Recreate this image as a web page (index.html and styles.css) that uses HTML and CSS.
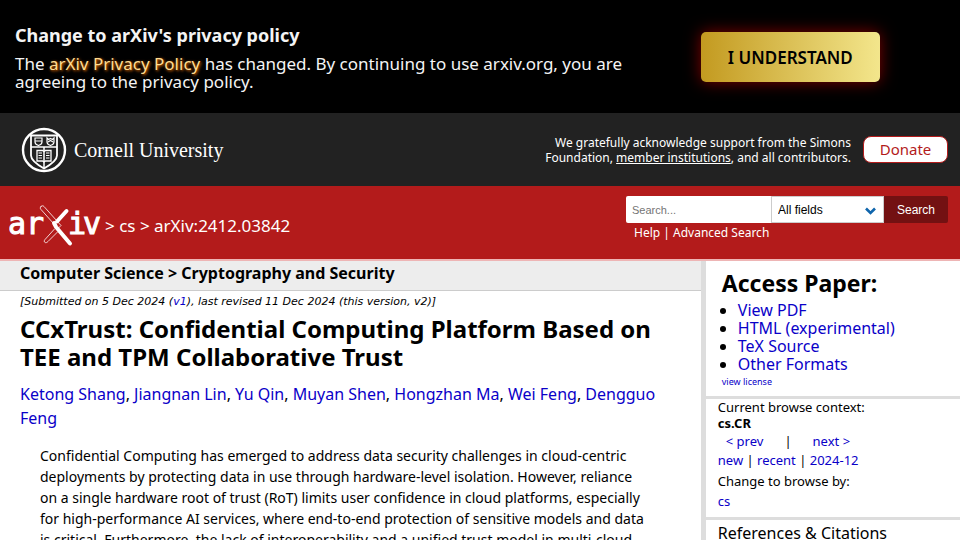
FILE: index.html
```html
<!DOCTYPE html>
<html lang="en">
<head>
    <meta charset="UTF-8">
    <meta name="viewport" content="width=device-width, initial-scale=1.0">
    <title>[2412.03842] CCxTrust: Confidential Computing Platform Based on TEE and TPM Collaborative Trust</title>
    <link rel="stylesheet" href="styles.css">
</head>
<body>
    <section class="policy-banner">
        <div class="policy-text">
            <h2>Change to arXiv's privacy policy</h2>
            <p>The <a href="#">arXiv Privacy Policy</a> has changed. By continuing to use arxiv.org, you are<br>agreeing to the privacy policy.</p>
        </div>
        <div class="policy-action">
            <button type="button" class="understand">I UNDERSTAND</button>
        </div>
    </section>

    <header>
        <div class="support-bar">
            <a class="cornell" href="#">
                <svg width="46" height="46" viewBox="0 0 46 46" fill="none" stroke="#fff" aria-hidden="true">
                    <circle cx="23" cy="23" r="21" stroke-width="2.4"/>
                    <!-- shield -->
                    <path d="M10 8.5h26v20c0 5-6 9-13 13-7-4-13-8-13-13z" stroke-width="1.8"/>
                    <path d="M10 20h26M23 20v21" stroke-width="1.5"/>
                    <path d="M14 11h7v4c0 2-2 3-3.500 3.500-1.500-.5-3.500-1.500-3.500-3.500zM14 14h7M26 11l1.500 1.500 2-1 2 1L33 11v4c0 2-2 3-3.500 3.500C28 18 26 17 26 15zM27 15l2.500-1.500L32 15" stroke-width="1.200"/>
                    <!-- open book -->
                    <path d="M16 23.500h5.500l1.500 1 1.500-1H30v10.500h-5.500l-1.500 1-1.500-1H16z" stroke-width="1.300"/>
                    <path d="M17.500 26H21M17.500 28.500H21M17.500 31H21M25 26h3.500M25 28.500h3.500M25 31h3.500" stroke-width="1"/>
                </svg>
                <span>Cornell University</span>
            </a>
            <p class="support-text">We gratefully acknowledge support from the Simons<br>Foundation, <a href="#">member institutions</a>, and all contributors.</p>
            <a class="donate" href="#">Donate</a>
        </div>

        <div class="title-bar">
            <div class="breadcrumbs">
                <a class="logo" href="#" aria-label="arXiv">
                    <svg width="93" height="42" viewBox="0 0 93 42">
                        <g class="logo-text">
                            <text x="-1" y="29">ar</text>
                            <text x="59" y="29">i</text>
                            <text x="74" y="29">v</text>
                        </g>
                        <g fill="none" stroke="#fff" stroke-linecap="round">
                            <path d="M57.500 6L48 16.500" stroke-width="4"/>
                            <path d="M45 18l2 4L61 38.500" stroke-width="4"/>
                            <path d="M32 1.500c-1 1-1 2 0 3L49 23.500l3-3L35 1.500c-1-1-2-1-3 0zM45.500 24L36 34.500c-1 1-1 2.500 0 3s2 0 3-1L48.500 27" stroke-width=".8"/>
                        </g>
                    </svg>
                </a>
                <span>&gt; <a href="#">cs</a> &gt; arXiv:2412.03842</span>
            </div>
            <form class="search">
                <div class="search-row">
                    <input type="text" placeholder="Search..." aria-label="Search term">
                    <select aria-label="Field to search">
                        <option>All fields</option>
                        <option>Title</option>
                        <option>Author</option>
                        <option>Abstract</option>
                    </select>
                    <svg class="chevron" width="11" height="8" viewBox="0 0 11 8" aria-hidden="true">
                        <path d="M1 1.500l4.500 4.500L10 1.500" fill="none" stroke="#0f65ac" stroke-width="2.600"/>
                    </svg>
                    <button type="submit">Search</button>
                </div>
                <p class="search-help"><a href="#">Help</a> | <a href="#">Advanced Search</a></p>
            </form>
        </div>
    </header>

    <main>
        <article>
            <h2 class="subject">Computer Science &gt; Cryptography and Security</h2>
            <div class="paper">
                <p class="dateline">[Submitted on 5 Dec 2024 (<a href="#">v1</a>), last revised 11 Dec 2024 (this version, v2)]</p>
                <h1>CCxTrust: Confidential Computing Platform Based on<br>TEE and TPM Collaborative Trust</h1>
                <p class="authors"><a href="#">Ketong Shang</a>, <a href="#">Jiangnan Lin</a>, <a href="#">Yu Qin</a>, <a href="#">Muyan Shen</a>, <a href="#">Hongzhan Ma</a>, <a href="#">Wei Feng</a>, <a href="#">Dengguo<br>Feng</a></p>
                <p class="abstract">
                    Confidential Computing has emerged to address data security challenges in cloud-centric<br>
                    deployments by protecting data in use through hardware-level isolation. However, reliance<br>
                    on a single hardware root of trust (RoT) limits user confidence in cloud platforms, especially<br>
                    for high-performance AI services, where end-to-end protection of sensitive models and data<br>
                    is critical. Furthermore, the lack of interoperability and a unified trust model in multi-cloud
                </p>
            </div>
        </article>

        <aside>
            <section class="access">
                <h2>Access Paper:</h2>
                <ul>
                    <li><a href="#">View PDF</a></li>
                    <li><a href="#">HTML (experimental)</a></li>
                    <li><a href="#">TeX Source</a></li>
                    <li><a href="#">Other Formats</a></li>
                </ul>
                <a class="license" href="#">view license</a>
            </section>
            <section class="browse">
                <h3>Current browse context:</h3>
                <p class="current">cs.CR</p>
                <p class="prevnext"><a href="#">&lt; prev</a><span>|</span><a href="#">next &gt;</a></p>
                <p class="list"><a href="#">new</a> | <a href="#">recent</a> | <a href="#">2024-12</a></p>
                <h3 class="change">Change to browse by:</h3>
                <a href="#">cs</a>
            </section>
            <section class="references">
                <h3>References &amp; Citations</h3>
            </section>
        </aside>
    </main>
</body>
</html>
```
FILE: styles.css
```css
* {
    box-sizing: border-box;
}

body {
    margin: 0;
    font-family: "Lucida Grande", "Noto Sans", "Open Sans", sans-serif;
    font-size: 16px;
    line-height: 18px;
    color: #000;
    background-color: #fff;
    height: 100vh;
    overflow: hidden;
}

h1, h2, h3, p, ul {
    margin: 0;
    padding: 0;
}

a {
    color: #0a00c8;
    text-decoration: none;
}

/* privacy banner */
.policy-banner {
    display: grid;
    grid-template-columns: 73% 27%;
    padding: 23px 0 22px;
    background-color: #000;
    color: #f4f4f4;
}

.policy-text {
    padding-left: 15px;
}

.policy-text h2 {
    margin-bottom: 8px;
    font-size: 18px;
    line-height: 24px;
}

.policy-text p {
    font-size: 17px;
}

.policy-text a {
    color: #ffdc91;
    text-shadow: 1px 1px 3px #f70;
}

.policy-action {
    padding-top: 9px;
}

.understand {
    width: 179px;
    height: 50px;
    border: 0;
    border-radius: 5px;
    background: linear-gradient(to right, #c39a20, #f3e68c);
    box-shadow: 0 0 16px #800000;
    color: #000;
    font-family: inherit;
    font-size: 17px;
    font-weight: 600;
}

/* header */
.support-bar {
    display: flex;
    align-items: center;
    height: 73px;
    padding: 0 12px 0 21px;
    background-color: #222;
    color: #fff;
}

.cornell {
    display: flex;
    align-items: center;
    gap: 7px;
    margin-right: auto;
    color: #fff;
    font-family: "Palatino Linotype", "Liberation Serif", serif;
    font-size: 20px;
    line-height: 24px;
}

.support-text {
    margin-right: 12px;
    font-size: 12px;
    line-height: 15px;
    text-align: right;
}

.support-text a {
    color: #fff;
    text-decoration: underline;
}

.donate {
    width: 85px;
    padding: 3px 0 4px;
    border: 1px solid #b31b1b;
    border-radius: 8px;
    background-color: #fff;
    color: #b31b1b;
    font-size: 15px;
    text-align: center;
}

.title-bar {
    display: flex;
    justify-content: space-between;
    height: 75px;
    padding: 10px 12px 0 9px;
    border-bottom: 2px solid #eeb5b5;
    background-color: #b31b1b;
    color: #fff;
}

.title-bar a {
    color: #fff;
}

.breadcrumbs {
    display: flex;
    align-items: center;
    gap: 3px;
    height: 60px;
    font-size: 17px;
}

.logo svg {
    display: block;
}

.logo-text {
    fill: #fff;
    stroke: #fff;
    stroke-width: 1;
    font-family: "DejaVu Sans Mono", monospace;
    font-size: 30px;
}

.search {
    width: 322px;
}

.search-row {
    display: flex;
    position: relative;
    height: 27px;
}

.search input,
.search select,
.search button {
    border: 0;
    border-radius: 0;
    font-family: "Liberation Sans", Arial, sans-serif;
    font-size: 11px;
}

.search input {
    flex: 1;
    min-width: 0;
    padding: 0 6px;
    border-radius: 2px 0 0 2px;
}

.search select {
    width: 113px;
    padding: 0 6px;
    border: 1px solid #ccc;
    background-color: #fff;
    color: #000;
    font-size: 12px;
    appearance: none;
}

.search button {
    width: 64px;
    border-radius: 0 2px 2px 0;
    background-color: #731112;
    color: #fff;
    font-size: 12px;
}

.chevron {
    position: absolute;
    top: 11px;
    right: 72px;
    pointer-events: none;
}

.search-help {
    padding-left: 8px;
    font-size: 12px;
    line-height: 20px;
}

/* paper */
main {
    display: grid;
    grid-template-columns: 73% 27%;
}

.subject {
    padding: 0 20px 5px;
    border-bottom: 1px solid #ccc;
    background-color: #ededed;
    font-size: 16px;
    line-height: 24px;
}

.paper {
    padding: 4px 20px 0;
    white-space: nowrap;
}

.dateline {
    font-family: "Lucida Grande", "DejaVu Sans", sans-serif;
    font-size: 11px;
    line-height: 14px;
    font-style: italic;
}

.paper h1 {
    margin: 6px 0 11px;
    font-size: 24px;
    line-height: 28px;
}

.authors {
    line-height: 24px;
}

.abstract {
    padding: 15px 20px 0;
    font-size: 14px;
    line-height: 21px;
}

/* sidebar */
aside {
    border-left: 5px solid #ddd;
}

.access {
    padding: 9px 16px 5px;
    border-bottom: 3px solid #ddd;
}

.access h2 {
    font-size: 23px;
    line-height: 26px;
    margin-bottom: 5px;
}

.access ul {
    padding-left: 16px;
}

.license {
    display: block;
    font-size: 9px;
}

.browse {
    padding: 0 12px 7px;
    border-bottom: 3px solid #ddd;
    font-size: 13px;
}

.browse h3 {
    font-size: 13px;
    font-weight: normal;
    line-height: 17px;
}

.current {
    font-weight: bold;
    line-height: 15px;
}

.prevnext {
    display: flex;
    gap: 21px;
    padding-left: 8px;
    line-height: 20px;
}

.list {
    line-height: 18px;
}

.browse .change {
    margin: 4px 0 2px;
}

.references {
    padding: 4px 12px;
}

.references h3 {
    font-size: 16px;
    font-weight: normal;
}
```
